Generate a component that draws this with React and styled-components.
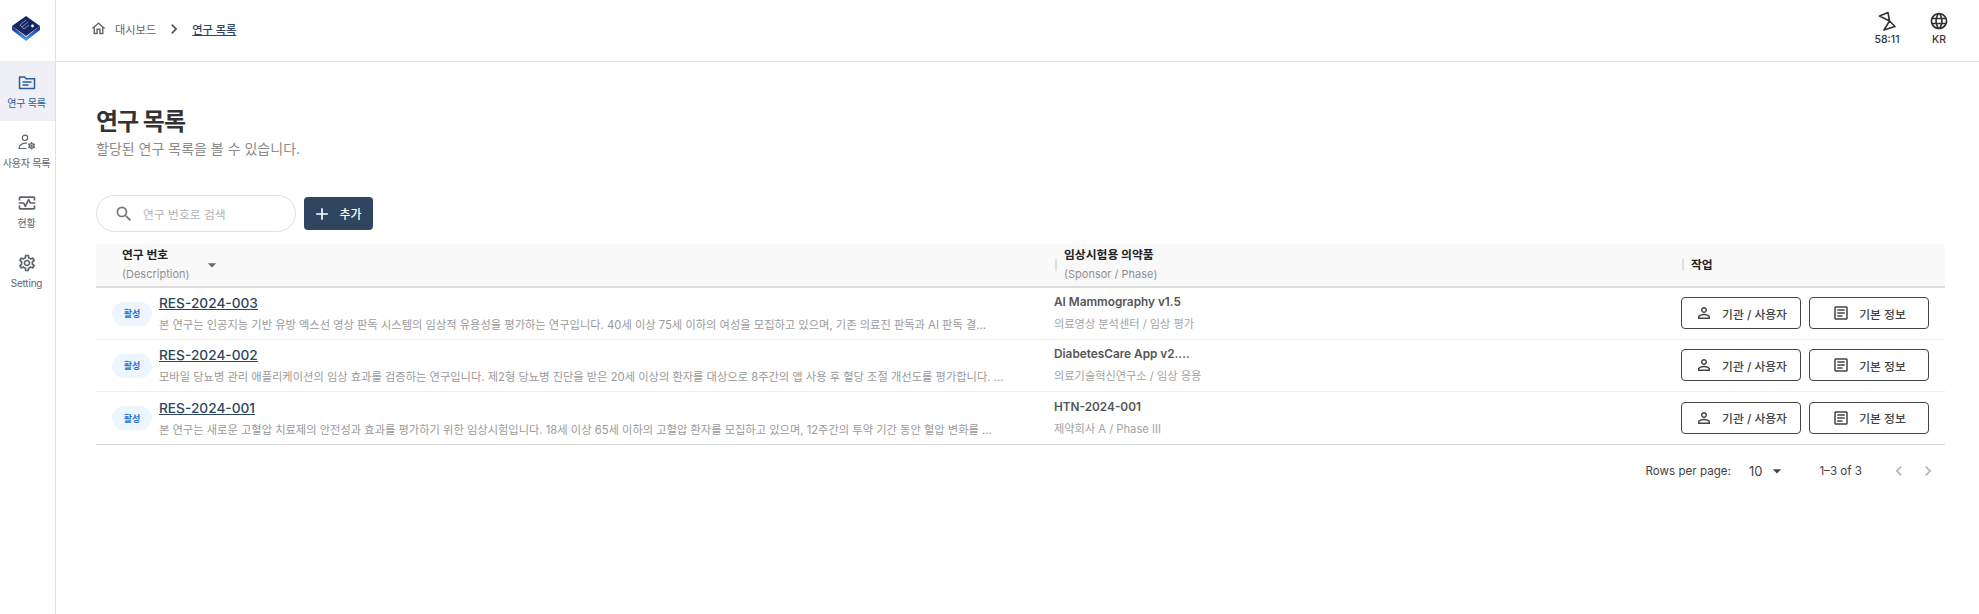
import React from 'react'
import styled, { createGlobalStyle } from 'styled-components'
import {
  MdOutlineHome,
  MdChevronRight,
  MdChevronLeft,
  MdOutlineMonitorHeart,
  MdOutlineSettings,
  MdSearch,
  MdAdd,
  MdLanguage,
  MdOutlinePersonOutline,
  MdOutlineArticle,
  MdArrowDropDown,
} from 'react-icons/md'

const GlobalStyle = createGlobalStyle`
  html, body {
    margin: 0;
    padding: 0;
    background: #fff;
    font-family: Inter, "Noto Sans CJK KR", sans-serif;
  }
  * { box-sizing: border-box; }
`

const Shell = styled.div`
  display: flex;
  height: 614px;
  overflow: hidden;
`

const Sidebar = styled.nav`
  flex: 0 0 56px;
  border-right: 1px solid #e0e0e0;
  display: flex;
  flex-direction: column;
`

const LogoBox = styled.div`
  height: 61px;
  display: flex;
  align-items: center;
  justify-content: center;
  padding: 0 3px 7px 0;
`

const NavItem = styled.div`
  height: 60px;
  display: flex;
  flex-direction: column;
  align-items: center;
  justify-content: center;
  gap: 3px;
  padding: 1px 2px 0 0;
  background: ${props => (props.$active ? '#eef0f5' : 'transparent')};
  color: ${props => (props.$active ? '#2f5c9e' : '#5f6368')};
  svg { display: block; }
`

const NavLabel = styled.span`
  font-size: 10px;
  line-height: 14px;
  white-space: nowrap;
  letter-spacing: -0.2px;
`

const Body = styled.div`
  flex: 1;
  display: flex;
  flex-direction: column;
  min-width: 0;
`

const TopBar = styled.header`
  height: 62px;
  border-bottom: 1px solid #e0e0e0;
  display: flex;
  align-items: center;
  justify-content: space-between;
  padding: 0 22px 4px 34px;
`

const Crumbs = styled.div`
  display: flex;
  align-items: center;
  font-size: 11.2px;
  color: #666;
  svg { display: block; }
`

const CrumbText = styled.span`
  margin-left: 8px;
`

const CrumbCurrent = styled.span`
  color: #2e4560;
  text-decoration: underline;
  font-weight: 500;
`

const CrumbSep = styled.span`
  display: flex;
  margin: 0 8px;
  color: #555;
`

const TopActions = styled.div`
  display: flex;
  gap: 16px;
`

const TopAction = styled.div`
  width: 36px;
  display: flex;
  flex-direction: column;
  align-items: center;
  gap: 2px;
  color: #333;
  font-size: 10.5px;
  font-weight: 500;
  line-height: 13px;
  svg { display: block; }
`

const Main = styled.main`
  padding: 44px 34px 0 40px;
`

const Title = styled.h1`
  margin: 0;
  font-size: 24px;
  line-height: 32px;
  font-weight: 700;
  color: #333;
  letter-spacing: -1px;
`

const Subtitle = styled.p`
  margin: 1px 0 0;
  font-size: 14px;
  line-height: 20px;
  color: #8a8a8a;
`

const Toolbar = styled.div`
  margin-top: 36px;
  display: flex;
  align-items: center;
  gap: 8px;
  height: 37px;
`

const SearchBox = styled.div`
  width: 200px;
  height: 37px;
  border: 1px solid #e0e0e0;
  border-radius: 19px;
  display: flex;
  align-items: center;
  gap: 9px;
  padding-left: 17px;
  color: #757575;
  svg { display: block; }
`

const SearchHint = styled.span`
  font-size: 11.8px;
  color: #b4b4b4;
`

const AddButton = styled.button`
  width: 69px;
  height: 33px;
  border: 0;
  border-radius: 4px;
  background: #2f4560;
  color: #fff;
  font: inherit;
  font-size: 12px;
  font-weight: 500;
  display: flex;
  align-items: center;
  justify-content: center;
  gap: 7px;
  padding: 0 3px 0 0;
  svg { display: block; }
`

const Table = styled.div`
  margin-top: 12px;
  border-bottom: 1px solid #d9d9d9;
`

const Row = styled.div`
  display: grid;
  grid-template-columns: 958px 1fr 264px;
  align-items: center;
  height: 52px;
  border-bottom: 1px solid #eeeeee;
  &:last-child { border-bottom: 0; }
`

const HeadRow = styled(Row)`
  height: 44px;
  background: #f9f9f9;
  border-bottom: 2px solid #dcdcdc;
  border-radius: 4px 4px 0 0;
`

const HeadCell = styled.div`
  display: flex;
  align-items: center;
  padding-left: ${props => props.$pad}px;
  &::before {
    content: '';
    display: ${props => (props.$divider ? 'block' : 'none')};
    width: 2px;
    height: 12px;
    background: #e0e0e0;
    margin-right: 7px;
  }
`

const HeadStack = styled.div`
  display: flex;
  flex-direction: column;
  margin-bottom: 1px;
`

const HeadName = styled.span`
  font-size: 11.8px;
  line-height: 20px;
  font-weight: 700;
  color: #222;
`

const HeadHint = styled.span`
  font-size: 11px;
  line-height: 19px;
  color: #8f8f8f;
`

const SortMark = styled.span`
  display: flex;
  color: #666;
  margin-left: 12px;
`

const StudyCell = styled.div`
  display: flex;
  align-items: center;
  gap: 7px;
  padding-left: 16px;
  min-width: 0;
`

const Badge = styled.span`
  flex: 0 0 40px;
  height: 24px;
  border-radius: 12px;
  background: #edf5ff;
  color: #1f74d8;
  font-size: 9px;
  font-weight: 700;
  display: flex;
  align-items: center;
  justify-content: center;
`

const StudyText = styled.div`
  min-width: 0;
  display: flex;
  flex-direction: column;
  gap: 3px;
`

const StudyLink = styled.a`
  font-size: 13.7px;
  line-height: 20px;
  font-weight: 500;
  color: #2e4560;
  text-decoration: underline;
  align-self: flex-start;
`

const Description = styled.span`
  font-size: 11.25px;
  line-height: 18px;
  color: #9a9a9a;
  white-space: nowrap;
`

const DrugCell = styled.div`
  display: flex;
  flex-direction: column;
  gap: 5px;
`

const DrugName = styled.span`
  font-size: 11.8px;
  line-height: 17px;
  font-weight: 600;
  color: #555;
`

const DrugMeta = styled.span`
  font-size: 11.2px;
  line-height: 17px;
  color: #a3a3a3;
`

const ActionCell = styled.div`
  display: flex;
  gap: 8px;
  margin-bottom: 1px;
`

const OutlineButton = styled.button`
  width: 120px;
  height: 32px;
  border: 1px solid #444;
  border-radius: 4px;
  background: #fff;
  color: #444;
  font: inherit;
  font-size: 11.8px;
  font-weight: 500;
  display: flex;
  align-items: center;
  justify-content: center;
  gap: 9px;
  padding: 0;
  svg { display: block; }
`

const Pagination = styled.div`
  display: flex;
  align-items: center;
  justify-content: flex-end;
  height: 52px;
  font-size: 11.6px;
  color: #444;
  padding-right: 7px;
  svg { display: block; }
`

const PageSize = styled.span`
  display: flex;
  align-items: center;
  margin-left: 18px;
  gap: 5px;
  font-size: 13px;
`

const PageRange = styled.span`
  margin-left: 32px;
  margin-right: 27px;
`

const PageArrows = styled.span`
  display: flex;
  gap: 9px;
  color: #b5b5b5;
`

const FolderIcon = () => (
  <svg width="20" height="20" viewBox="0 0 20 20" fill="none" stroke="currentColor" strokeWidth="1.5">
    <path d="M2.5 15.5V4h5l1.6 1.8h8.4v9.7z" strokeLinejoin="round" />
    <path d="M5.5 9h9M5.5 12h6" />
  </svg>
)

const UserGearIcon = () => (
  <svg width="20" height="20" viewBox="0 0 20 20" fill="none" stroke="currentColor" strokeWidth="1.2">
    <circle cx="8" cy="4.8" r="2.7" />
    <path d="M9.5 10.2C5.5 10 2 12 2 15.5h7" strokeLinecap="round" strokeLinejoin="round" />
    <circle cx="14.6" cy="12.8" r="2.3" />
    <circle cx="14.6" cy="12.8" r="0.6" />
    <path d="M14.6 9v1.5M14.6 15.1v1.5M11.3 10.9l1.3.8M16.6 13.9l1.3.8M11.3 14.7l1.3-.8M16.6 11.7l1.3-.8" strokeWidth="1.4" />
  </svg>
)

const HourglassIcon = () => (
  <svg width="20" height="20" viewBox="0 0 20 20" fill="none" stroke="currentColor" strokeWidth="1.6" strokeLinejoin="round">
    <path d="M2.5 5 L11 1.5 L12.5 10 Z" />
    <path d="M12.5 10 L18 15.5 L7 19 Z" />
  </svg>
)

const LogoIcon = () => (
  <svg width="30" height="28" viewBox="0 0 30 28">
    <defs>
      <linearGradient id="logoSide" gradientUnits="userSpaceOnUse" x1="0" y1="14" x2="0" y2="28">
        <stop offset="0" stopColor="#0d2a8a" />
        <stop offset="1" stopColor="#58a8f5" />
      </linearGradient>
    </defs>
    <path d="M1 13 L15 24 L29 13 L29 17 L15 28 L1 17 Z" fill="url(#logoSide)" />
    <path d="M15 3 L29 13 L15 23 L1 13 Z" fill="#14275f" />
    <path d="M9 12 L15 7 M11 14 L17 9 M13 16 L18 12 M9 12 L13 16" stroke="#8d9cc4" strokeWidth="0.9" />
    <circle cx="21.5" cy="13" r="1.4" fill="#fff" />
  </svg>
)

const studies = [
  {
    id: 'RES-2024-003',
    desc: '본 연구는 인공지능 기반 유방 엑스선 영상 판독 시스템의 임상적 유용성을 평가하는 연구입니다. 40세 이상 75세 이하의 여성을 모집하고 있으며, 기존 의료진 판독과 AI 판독 결...',
    drug: 'AI Mammography v1.5',
    meta: '의료영상 분석센터 / 임상 평가',
  },
  {
    id: 'RES-2024-002',
    desc: '모바일 당뇨병 관리 애플리케이션의 임상 효과를 검증하는 연구입니다. 제2형 당뇨병 진단을 받은 20세 이상의 환자를 대상으로 8주간의 앱 사용 후 혈당 조절 개선도를 평가합니다. ...',
    drug: 'DiabetesCare App v2....',
    meta: '의료기술혁신연구소 / 임상 응용',
  },
  {
    id: 'RES-2024-001',
    desc: '본 연구는 새로운 고혈압 치료제의 안전성과 효과를 평가하기 위한 임상시험입니다. 18세 이상 65세 이하의 고혈압 환자를 모집하고 있으며, 12주간의 투약 기간 동안 혈압 변화를 ...',
    drug: 'HTN-2024-001',
    meta: '제약회사 A / Phase III',
  },
]

export default function App() {
  return (
    <Shell>
      <GlobalStyle />
      <Sidebar>
        <LogoBox><LogoIcon /></LogoBox>
        <NavItem $active><FolderIcon /><NavLabel>연구 목록</NavLabel></NavItem>
        <NavItem><UserGearIcon /><NavLabel>사용자 목록</NavLabel></NavItem>
        <NavItem><MdOutlineMonitorHeart size={20} /><NavLabel>현황</NavLabel></NavItem>
        <NavItem><MdOutlineSettings size={20} /><NavLabel>Setting</NavLabel></NavItem>
      </Sidebar>
      <Body>
        <TopBar>
          <Crumbs>
            <MdOutlineHome size={17} />
            <CrumbText>대시보드</CrumbText>
            <CrumbSep><MdChevronRight size={20} /></CrumbSep>
            <CrumbCurrent>연구 목록</CrumbCurrent>
          </Crumbs>
          <TopActions>
            <TopAction><HourglassIcon />58:11</TopAction>
            <TopAction><MdLanguage size={20} />KR</TopAction>
          </TopActions>
        </TopBar>
        <Main>
          <Title>연구 목록</Title>
          <Subtitle>할당된 연구 목록을 볼 수 있습니다.</Subtitle>
          <Toolbar>
            <SearchBox><MdSearch size={20} /><SearchHint>연구 번호로 검색</SearchHint></SearchBox>
            <AddButton><MdAdd size={20} />추가</AddButton>
          </Toolbar>
          <Table>
            <HeadRow>
              <HeadCell $pad={26}>
                <HeadStack>
                  <HeadName>연구 번호</HeadName>
                  <HeadHint>(Description)</HeadHint>
                </HeadStack>
                <SortMark><MdArrowDropDown size={20} /></SortMark>
              </HeadCell>
              <HeadCell $pad={1} $divider>
                <HeadStack>
                  <HeadName>임상시험용 의약품</HeadName>
                  <HeadHint>(Sponsor / Phase)</HeadHint>
                </HeadStack>
              </HeadCell>
              <HeadCell $pad={1} $divider>
                <HeadName>작업</HeadName>
              </HeadCell>
            </HeadRow>
            {studies.map(study => (
              <Row key={study.id}>
                <StudyCell>
                  <Badge>활성</Badge>
                  <StudyText>
                    <StudyLink>{study.id}</StudyLink>
                    <Description>{study.desc}</Description>
                  </StudyText>
                </StudyCell>
                <DrugCell>
                  <DrugName>{study.drug}</DrugName>
                  <DrugMeta>{study.meta}</DrugMeta>
                </DrugCell>
                <ActionCell>
                  <OutlineButton><MdOutlinePersonOutline size={18} />기관 / 사용자</OutlineButton>
                  <OutlineButton><MdOutlineArticle size={18} />기본 정보</OutlineButton>
                </ActionCell>
              </Row>
            ))}
          </Table>
          <Pagination>
            Rows per page:
            <PageSize>10<MdArrowDropDown size={20} /></PageSize>
            <PageRange>1–3 of 3</PageRange>
            <PageArrows><MdChevronLeft size={20} /><MdChevronRight size={20} /></PageArrows>
          </Pagination>
        </Main>
      </Body>
    </Shell>
  )
}
